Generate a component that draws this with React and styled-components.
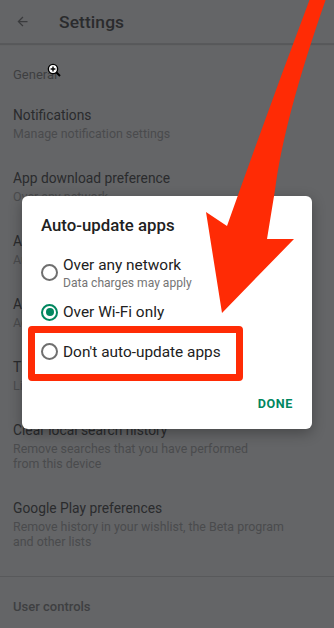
import styled, { createGlobalStyle } from "styled-components";

const GlobalStyle = createGlobalStyle`
  html, body {
    margin: 0;
    padding: 0;
    background: #646567;
  }
  body {
    font-family: Roboto, "Noto Sans", "Liberation Sans", sans-serif;
    -webkit-font-smoothing: antialiased;
  }
`;

const Screen = styled.div`
  position: relative;
  width: 334px;
  height: 628px;
  overflow: hidden;
  background: #646567;
`;

const Header = styled.header`
  display: flex;
  align-items: center;
  height: 43px;
  padding-left: 15px;
  border-bottom: 1px solid #58595b;
  box-shadow: 0 1px 1px rgba(0, 0, 0, 0.12);
`;

const BackButton = styled.span`
  display: flex;
  width: 15px;
  height: 15px;
  margin-right: 29px;
  color: #3a3b3d;
`;

const HeaderTitle = styled.h1`
  margin: 0;
  font-size: 17.4px;
  font-weight: 500;
  color: #2a2b2d;
  letter-spacing: 0.1px;
`;

const SectionLabel = styled.div`
  padding: ${({ $top }) => $top}px 13px ${({ $bottom }) => $bottom}px;
  font-size: 13px;
  line-height: 16px;
  font-weight: ${({ $bold }) => ($bold ? 500 : 400)};
  color: #3e3f41;
`;

const Item = styled.div`
  padding: 13px 13px 15px;
`;

const ItemTitle = styled.div`
  font-size: 13.8px;
  line-height: 19px;
  color: #2a2b2d;
`;

const ItemSub = styled.div`
  margin-top: 1px;
  font-size: 12.4px;
  line-height: 15px;
  color: #4a4b4d;
  white-space: nowrap;
`;

const Divider = styled.div`
  margin-top: 12px;
  height: 1px;
  background: #58595b;
`;

const Dialog = styled.div`
  position: absolute;
  left: 22px;
  top: 196px;
  width: 290px;
  height: 233px;
  box-sizing: border-box;
  padding: 17px 19px;
  background: #ffffff;
  border-radius: 6px;
  box-shadow: 0 4px 14px rgba(0, 0, 0, 0.3);
  display: flex;
  flex-direction: column;
`;

const DialogTitle = styled.h2`
  margin: 0 0 16px;
  font-size: 16.8px;
  line-height: 24px;
  font-weight: 500;
  color: #212121;
`;

const Option = styled.div`
  display: flex;
  align-items: center;
  min-height: 39.5px;
`;

const Radio = styled.span`
  flex: none;
  box-sizing: border-box;
  width: 17px;
  height: 17px;
  border-radius: 50%;
  border: 2px solid ${({ $checked }) => ($checked ? "#01875f" : "#6f6f6f")};
  margin-right: 5px;
  display: flex;
  align-items: center;
  justify-content: center;
  &::after {
    content: "";
    display: ${({ $checked }) => ($checked ? "block" : "none")};
    width: 8px;
    height: 8px;
    border-radius: 50%;
    background: #01875f;
  }
`;

const OptionText = styled.div`
  display: flex;
  flex-direction: column;
`;

const OptionLabel = styled.span`
  font-size: 15.4px;
  line-height: 20px;
  color: #212121;
`;

const OptionHint = styled.span`
  font-size: 12.1px;
  line-height: 16px;
  color: #757575;
`;

const Actions = styled.div`
  margin-top: auto;
  display: flex;
  justify-content: flex-end;
`;

const DoneButton = styled.button`
  border: 0;
  background: none;
  padding: 0;
  font-family: inherit;
  font-size: 12.6px;
  line-height: 16px;
  font-weight: 700;
  letter-spacing: 0.6px;
  color: #01875f;
`;

const Highlight = styled.div`
  position: absolute;
  left: 6px;
  top: 130px;
  width: 215px;
  height: 55px;
  box-sizing: border-box;
  border: 7px solid #ff2b05;
  border-radius: 4px;
  pointer-events: none;
`;

const Annotation = styled.svg`
  position: absolute;
  left: 0;
  top: 0;
  pointer-events: none;
`;

const Cursor = styled.svg`
  position: absolute;
  left: 47px;
  top: 63px;
`;

const items = [
  { title: "Notifications", sub: ["Manage notification settings"] },
  { title: "App download preference", sub: ["Over any network"] },
  { title: "Auto-update apps", sub: ["Auto-update apps over Wi-Fi only"] },
  { title: "Add icon to Home screen", sub: ["Add icons for new apps"] },
  { title: "Theme", sub: ["Light"] },
  {
    title: "Clear local search history",
    sub: ["Remove searches that you have performed", "from this device"],
  },
  {
    title: "Google Play preferences",
    sub: ["Remove history in your wishlist, the Beta program", "and other lists"],
  },
];

export default function App() {
  return (
    <Screen>
      <GlobalStyle />
      <Header>
        <BackButton>
          <svg viewBox="0 0 24 24" width="15" height="15" fill="currentColor">
            <path d="M20 11H7.83l5.59-5.59L12 4l-8 8 8 8 1.41-1.41L7.83 13H20v-2z" />
          </svg>
        </BackButton>
        <HeaderTitle>Settings</HeaderTitle>
      </Header>
      <SectionLabel $top={23} $bottom={10}>
        General
      </SectionLabel>
      {items.map((it) => (
        <Item key={it.title}>
          <ItemTitle>{it.title}</ItemTitle>
          <ItemSub>
            {it.sub.map((line, i) => (
              <div key={i}>{line}</div>
            ))}
          </ItemSub>
        </Item>
      ))}
      <Divider />
      <SectionLabel $top={22} $bottom={10} $bold>
        User controls
      </SectionLabel>

      <Cursor width="14" height="14" viewBox="0 0 14 14">
        <line x1="8" y1="8" x2="13" y2="13" stroke="#000" strokeWidth="2" />
        <circle cx="6" cy="6" r="4.6" fill="#fff" stroke="#000" strokeWidth="1.4" />
        <path d="M6 3.6v4.8M3.6 6h4.8" stroke="#000" strokeWidth="1.4" />
      </Cursor>

      <Dialog>
        <DialogTitle>Auto-update apps</DialogTitle>
        <Option>
          <Radio />
          <OptionText>
            <OptionLabel>Over any network</OptionLabel>
            <OptionHint>Data charges may apply</OptionHint>
          </OptionText>
        </Option>
        <Option>
          <Radio $checked />
          <OptionText>
            <OptionLabel>Over Wi-Fi only</OptionLabel>
          </OptionText>
        </Option>
        <Option>
          <Radio />
          <OptionText>
            <OptionLabel>Don't auto-update apps</OptionLabel>
          </OptionText>
        </Option>
        <Actions>
          <DoneButton>DONE</DoneButton>
        </Actions>
        <Highlight />
      </Dialog>

      <Annotation width="334" height="330" viewBox="0 0 334 330">
        <path
          d="M311 -4 L327 -4 Q 284 118 275 190 L267 239 L294 239 L222 313 L206 212 L227 226 Q 268 110 311 -4 Z"
          fill="#ff2b05"
        />
      </Annotation>
    </Screen>
  );
}
